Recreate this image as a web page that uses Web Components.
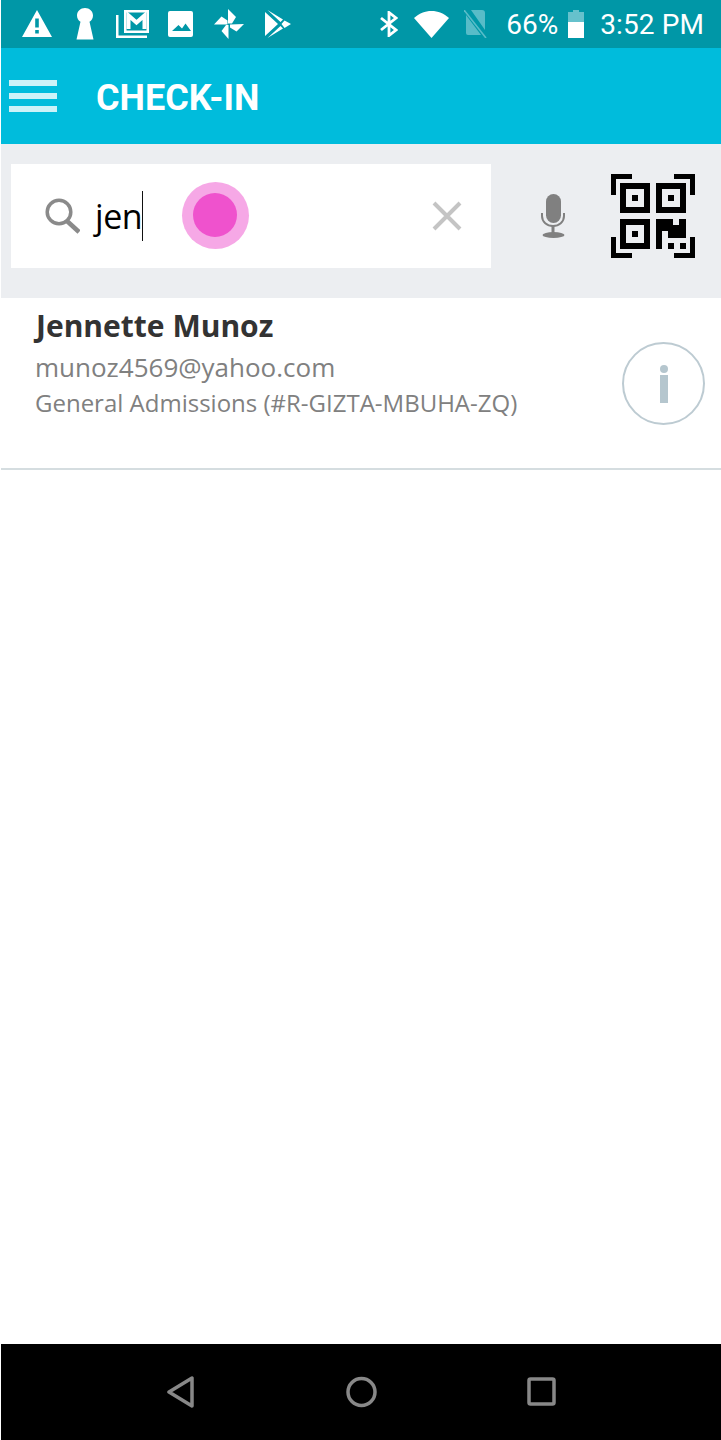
<!DOCTYPE html>
<html>
<head>
<meta charset="utf-8">
<style>
  html, body { margin: 0; padding: 0; height: 100%; background: #fff; }
  body { display: flex; flex-direction: column; height: 1440px; width: 721px; overflow: hidden; padding-left: 1px; box-sizing: border-box; }
  attendee-list { flex: 1; }
</style>
</head>
<body>
<status-bar></status-bar>
<app-bar title="CHECK-IN"></app-bar>
<search-bar value="jen"></search-bar>
<attendee-list>
  <attendee-row name="Jennette Munoz" email="munoz4569@yahoo.com" ticket="General Admissions (#R-GIZTA-MBUHA-ZQ)"></attendee-row>
</attendee-list>
<nav-buttons></nav-buttons>
<script>
class StatusBar extends HTMLElement {
  constructor () {
    super()
    this.attachShadow({ mode: 'open' })
  }

  connectedCallback () {
    this.shadowRoot.innerHTML = `
      <style>
        :host { display: flex; height: 48px; flex: none; align-items: center; background: #0097a7; color: #fff;
          font: 400 28px Roboto, sans-serif; justify-content: space-between; padding: 0 17px 0 21px; }
        .side { display: flex; align-items: center; }
        svg { display: block; fill: #fff; flex: none; }
        .pct { margin-left: 19px; }
        .time { margin-left: 16px; letter-spacing: .1px; }
      </style>
      <div class="side">
        <svg width="30" height="28" viewBox="0 0 30 28"><path fill-rule="evenodd" d="M15 0 30 27H0ZM13.200 8.500V17.500H16.800V8.500ZM13.200 20V23.500H16.800V20Z"/></svg>
        <svg style="margin-left:24px" width="18" height="32" viewBox="0 0 18 32"><path d="M9 0C13.500 0 17 3.300 17 7.500 17 10.300 15.600 12.500 13.500 13.800L17.500 31.500H.5L4.500 13.800C2.400 12.500 1 10.300 1 7.500 1 3.300 4.500 0 9 0Z"/></svg>
        <svg style="margin-left:22px" width="33" height="28" viewBox="0 0 33 28"><path fill-rule="evenodd" d="M8 0H33V23H8ZM10.500 2.500V20.500H30.500V2.500Z"/><path d="M0 5H2.500V25.500H31V28H0Z"/><path fill="none" stroke="#fff" stroke-width="4" d="M12.500 19V5.500L20.500 12.500 28.500 5.500V19"/></svg>
        <svg style="margin-left:19px" width="25" height="26" viewBox="0 0 25 26"><path fill-rule="evenodd" d="M2 0H23Q25 0 25 2V24Q25 26 23 26H2Q0 26 0 24V2Q0 0 2 0ZM4 20H23L17.500 12.500 14 17.500 10.500 14Z"/></svg>
        <svg style="margin-left:21px" width="30" height="30" viewBox="0 0 30 30"><path d="M14 0 22 8 18 14.500H14ZM0 15.500 7.500 7.500 13.500 11.500V15.500ZM30 15 22.500 22.500 16 18.500V15.500ZM14.500 30 7.500 22 12 16H14.500Z"/></svg>
        <svg style="margin-left:21px" width="26" height="28" viewBox="0 0 26 28"><path fill-rule="evenodd" d="M0 2 13 14 0 26ZM2.500 0 18 9.500 15.500 12ZM19.500 10.500 26 14 19.500 18 16.500 14ZM2.500 28 15.500 16 18 18.500Z"/></svg>
      </div>
      <div class="side">
        <svg width="18" height="26" viewBox="0 0 18 26"><path fill="none" stroke="#fff" stroke-width="2.800" d="M1 7 16 19 9 24.500V1.500L16 7 1 19"/></svg>
        <svg style="margin-left:16px" width="35" height="27" viewBox="0 0 35 27"><path d="M17.500 27 0 7C5 2.500 11 0 17.500 0S30 2.500 35 7Z"/></svg>
        <svg width="23" height="28" viewBox="0 0 23 28" style="margin-left:15px"><path fill="#58bcc8" d="M7 0H18Q21 0 21 3V20ZM2 5 17 25H4Q2 25 2 23Z"/><path fill="none" stroke="#58bcc8" stroke-width="1.600" d="M0 0 22 28"/></svg>
        <span class="pct">66%</span>
        <svg style="margin-left:10px" width="16" height="28" viewBox="0 0 16 28"><path fill="#66c1cc" d="M5 0H11V2H16V12H0V2H5Z"/><path d="M0 12H16V28H0Z"/></svg>
        <span class="time">3:52 PM</span>
      </div>`
  }
}
customElements.define('status-bar', StatusBar)

class AppBar extends HTMLElement {
  constructor () {
    super()
    this.attachShadow({ mode: 'open' })
  }

  connectedCallback () {
    const title = this.getAttribute('title') || ''
    this.shadowRoot.innerHTML = `
      <style>
        :host { display: flex; height: 96px; flex: none; align-items: center; background: #00bcdc; color: #fff; padding-left: 8px; }
        .burger { display: flex; flex-direction: column; gap: 7px; width: 48px; }
        .burger i { display: block; height: 6px; background: #ccf2f8; }
        h1 { margin: 4px 0 0 39px; font: 700 36px Roboto, sans-serif; }
      </style>
      <div class="burger"><i></i><i></i><i></i></div>
      <h1>${title}</h1>`
  }
}
customElements.define('app-bar', AppBar)

class SearchBar extends HTMLElement {
  constructor () {
    super()
    this.attachShadow({ mode: 'open' })
  }

  connectedCallback () {
    const value = this.getAttribute('value') || ''
    this.shadowRoot.innerHTML = `
      <style>
        :host { display: flex; height: 154px; flex: none; box-sizing: border-box; padding: 20px 0 30px 10px; background: #eceef1; position: relative; }
        .box { display: flex; align-items: center; width: 480px; background: #fff; padding-left: 33px; box-sizing: border-box; }
        .value { margin-left: 15px; font: 400 34px "Open Sans", sans-serif; color: #000; border-right: 1px solid #111; height: 50px; line-height: 50px; letter-spacing: -.4px; }
        .clear { margin-left: auto; margin-right: 29px; }
        .actions { display: flex; align-items: center; }
        .mic { margin-left: 49px; }
        .qr { margin-left: 45px; }
        svg { display: block; flex: none; }
        .touch { position: absolute; left: 181px; top: 38px; width: 67px; height: 67px; border-radius: 50%; background: #f6a8e6; display: flex; align-items: center; justify-content: center; }
        .touch i { display: block; width: 44px; height: 44px; margin: 0 1px 1px 0; border-radius: 50%; background: #ef52cd; }
      </style>
      <div class="box">
        <svg width="36" height="36" viewBox="0 0 36 36" fill="none" stroke="#8a8a8a"><circle cx="15" cy="14" r="11.800" stroke-width="3.500"/><path stroke-width="4.500" d="M23 23 35 34"/></svg>
        <span class="value">${value}</span>
        <svg class="clear" width="30" height="30" viewBox="0 0 30 30" stroke="#c4c4c4" stroke-width="4"><path d="M2 2 28 28M28 2 2 28"/></svg>
      </div>
      <div class="actions">
        <svg class="mic" width="26" height="44" viewBox="0 0 26 44"><rect x="6" y="0" width="15" height="29" rx="7.500" fill="#808080"/><path fill="none" stroke="#808080" stroke-width="2" d="M2 19V22C2 28 7 32 13 32S24 28 24 22V19"/><path stroke="#808080" stroke-width="3" d="M13 32V40"/><ellipse cx="13.500" cy="41" rx="11" ry="3" fill="#808080"/></svg>
        <svg class="qr" width="84" height="84" viewBox="0 0 84 84">
          <path d="M0 0H21V5H5V21H0ZM63 0H84V21H79V5H63ZM0 63H5V79H21V84H0ZM79 63H84V84H63V79H79Z"/>
          <path fill-rule="evenodd" d="M9 9H39V39H9ZM15 15V33H33V15ZM45 9H75V39H45ZM51 15V33H69V15ZM9 45H39V75H9ZM15 51V69H33V51Z"/>
          <path d="M21 21H27V27H21ZM57 21H63V27H57ZM21 57H27V63H21ZM45 45H62V51H68V45H75V64H57V57H51V75H45ZM57 69H63V75H57ZM69 69H75V75H69Z"/>
        </svg>
      </div>
      <div class="touch"><i></i></div>`
  }
}
customElements.define('search-bar', SearchBar)

class AttendeeRow extends HTMLElement {
  constructor () {
    super()
    this.attachShadow({ mode: 'open' })
  }

  connectedCallback () {
    this.shadowRoot.innerHTML = `
      <style>
        :host { display: flex; height: 172px; box-sizing: border-box; border-bottom: 2px solid #d5dde0; padding-left: 34px; position: relative; font-family: "Open Sans", sans-serif; }
        .text { display: flex; flex-direction: column; padding-top: 8px; flex: 1; }
        .name { font-size: 30px; font-weight: 700; color: #333; line-height: 40px; margin-left: 1px; }
        .email { font-size: 26px; color: #808080; line-height: 36px; margin-top: 3px; }
        .ticket { font-size: 24px; color: #808080; line-height: 34px; margin-top: 1px; }
        .info { flex: none; width: 83px; height: 83px; margin: 44px 16px 0 0; border: 2px solid #bdcbd2; border-radius: 50%; box-sizing: border-box; display: flex; flex-direction: column; align-items: center; justify-content: center; }
        .info b { display: block; width: 8px; height: 8px; background: #b5c6ce; border-radius: 50%; }
        .info i { display: block; width: 8px; height: 28px; margin-top: 2px; background: #b5c6ce; }
      </style>
      <div class="text">
        <div class="name">${this.getAttribute('name')}</div>
        <div class="email">${this.getAttribute('email')}</div>
        <div class="ticket">${this.getAttribute('ticket')}</div>
      </div>
      <div class="info"><b></b><i></i></div>`
  }
}
customElements.define('attendee-row', AttendeeRow)

class AttendeeList extends HTMLElement {
  constructor () {
    super()
    this.attachShadow({ mode: 'open' }).innerHTML = '<style>:host { display: block; }</style><slot></slot>'
  }
}
customElements.define('attendee-list', AttendeeList)

class NavButtons extends HTMLElement {
  constructor () {
    super()
    this.attachShadow({ mode: 'open' })
  }

  connectedCallback () {
    this.shadowRoot.innerHTML = `
      <style>
        :host { display: flex; height: 96px; flex: none; align-items: center; justify-content: center; gap: 149px; background: #000; }
        svg { display: block; fill: none; stroke: #888; stroke-width: 3.500; stroke-linejoin: round; }
      </style>
      <svg width="31" height="32" viewBox="0 0 31 32"><path d="M26 2V30L3 16Z"/></svg>
      <svg width="31" height="32" viewBox="0 0 31 32"><circle cx="15.500" cy="16" r="13.500"/></svg>
      <svg width="31" height="32" viewBox="0 0 31 32"><rect x="3" y="3" width="25" height="25" rx="1.500"/></svg>`
  }
}
customElements.define('nav-buttons', NavButtons)
</script>
</body>
</html>
